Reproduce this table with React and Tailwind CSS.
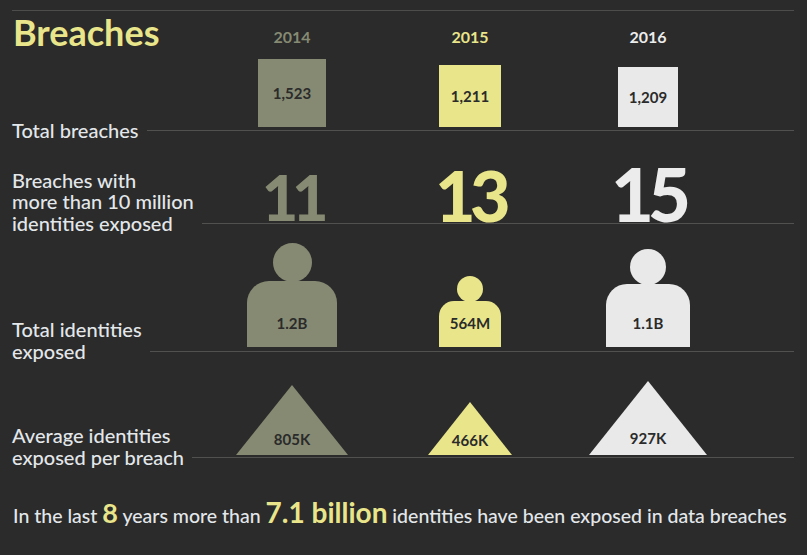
import React from "react";

function Label({ lines }) {
  return (
    <div className="flex items-end text-[20px] leading-[21.5px] font-medium text-[#e4e7ea]">
      <span className="whitespace-nowrap">
        {lines.map((l, i) => (
          <React.Fragment key={l}>
            {i > 0 && <br />}
            {l}
          </React.Fragment>
        ))}
      </span>
      <div className="mb-[10px] ml-[8px] h-px flex-1 bg-[#515250]" />
    </div>
  );
}

export default function App() {
  return (
    <div
      className="w-[807px] h-[555px] overflow-hidden bg-[#2a2b2a]"
      style={{ fontFamily: "Lato, 'Noto Sans', sans-serif" }}
    >
      <div className="ml-[12px] mr-[13px] mt-[10px] border-t border-[#4d4e4c]">
        {/* header */}
        <div className="grid h-[48px] grid-cols-[191px_178px_178px_178px_1fr]">
          <div className="pt-[3px] pl-[1px] text-[36px] font-bold leading-none text-[#e9e58a]">
            Breaches
          </div>
          <div className="pt-[18px] text-center text-[16px] font-bold leading-none text-[#868a73]">2014</div>
          <div className="pt-[18px] text-center text-[16px] font-bold leading-none text-[#e9e58a]">2015</div>
          <div className="pt-[18px] text-center text-[16px] font-bold leading-none text-[#ececec]">2016</div>
          <div />
        </div>

        {/* row 1: total breaches */}
        <div className="grid grid-cols-[191px_1fr] items-end">
          <Label lines={["Total breaches"]} />
          <div className="mb-[10px] grid h-[72px] grid-cols-[178px_178px_178px_1fr] items-end border-b border-[#515250]">
            <div className="mb-[3px] flex justify-center">
              <div className="flex h-[68px] w-[68px] items-center justify-center bg-[#868a73] text-[15px] font-bold text-[#2a2b2a]">1,523</div>
            </div>
            <div className="mb-[3px] flex justify-center">
              <div className="flex h-[62px] w-[62px] items-center justify-center bg-[#e9e58a] text-[15px] font-bold text-[#2a2b2a]">1,211</div>
            </div>
            <div className="mb-[3px] flex justify-center">
              <div className="flex h-[60px] w-[60px] items-center justify-center bg-[#e9e9e9] text-[15px] font-bold text-[#2a2b2a]">1,209</div>
            </div>
            <div />
          </div>
        </div>

        {/* row 2: big breaches */}
        <div className="grid grid-cols-[191px_1fr] items-end">
          <Label lines={["Breaches with", "more than 10 million", "identities exposed"]} />
          <div className="mb-[10px] grid h-[83px] grid-cols-[178px_178px_178px_1fr] items-end border-b border-[#515250]">
            <div className="mb-[1px] text-center text-[63px] font-black leading-[0.774] tracking-[-0.1em] text-[#868a73]">11</div>
            <div className="mb-[1px] text-center text-[70px] font-black leading-[0.774] tracking-[-0.08em] text-[#e9e58a]">13</div>
            <div className="mb-[1px] text-center text-[74px] font-black leading-[0.774] tracking-[-0.08em] text-[#ececec]">15</div>
            <div />
          </div>
        </div>

        {/* row 3: total identities */}
        <div className="grid grid-cols-[191px_1fr] items-end">
          <Label lines={["Total identities", "exposed"]} />
          <div className="mb-[10px] grid h-[118px] grid-cols-[178px_178px_178px_1fr] items-end border-b border-[#515250]">
            <div className="mb-[4px] flex flex-col items-center">
              <div className="h-[39px] w-[39px] rounded-full bg-[#868a73]" />
              <div className="-mt-px flex h-[66px] w-[90px] items-end justify-center rounded-t-[22px] bg-[#868a73] pb-[16px] text-[15px] font-bold leading-[15px] text-[#2a2b2a]">1.2B</div>
            </div>
            <div className="mb-[4px] flex flex-col items-center">
              <div className="h-[26px] w-[26px] rounded-full bg-[#e9e58a]" />
              <div className="-mt-px flex h-[46px] w-[62px] items-end justify-center rounded-t-[15px] bg-[#e9e58a] pb-[16px] text-[15px] font-bold leading-[15px] text-[#2a2b2a]">564M</div>
            </div>
            <div className="mb-[4px] flex flex-col items-center">
              <div className="h-[36px] w-[36px] rounded-full bg-[#e9e9e9]" />
              <div className="-mt-px flex h-[63px] w-[84px] items-end justify-center rounded-t-[21px] bg-[#e9e9e9] pb-[16px] text-[15px] font-bold leading-[15px] text-[#2a2b2a]">1.1B</div>
            </div>
            <div />
          </div>
        </div>

        {/* row 4: average */}
        <div className="grid grid-cols-[191px_1fr] items-end">
          <Label lines={["Average identities", "exposed per breach"]} />
          <div className="mb-[10px] grid h-[96px] grid-cols-[178px_178px_178px_1fr] items-end border-b border-[#515250]">
            <div className="mb-[2px] flex justify-center">
              <div className="flex h-[70px] w-[112px] items-end justify-center bg-[#868a73] pb-[8px] text-[15px] font-bold leading-[15px] text-[#2a2b2a] [clip-path:polygon(50%_0,100%_100%,0_100%)]">805K</div>
            </div>
            <div className="mb-[2px] flex justify-center">
              <div className="flex h-[53px] w-[84px] items-end justify-center bg-[#e9e58a] pb-[7px] text-[15px] font-bold leading-[15px] text-[#2a2b2a] [clip-path:polygon(50%_0,100%_100%,0_100%)]">466K</div>
            </div>
            <div className="mb-[2px] flex justify-center">
              <div className="flex h-[74px] w-[118px] items-end justify-center bg-[#e9e9e9] pb-[9px] text-[15px] font-bold leading-[15px] text-[#2a2b2a] [clip-path:polygon(50%_0,100%_100%,0_100%)]">927K</div>
            </div>
            <div />
          </div>
        </div>

        {/* footer */}
        <div className="mt-[29px] whitespace-nowrap pl-[1px] text-[19.5px] font-medium leading-[30px] text-[#e4e7ea]">
          In the last <span className="text-[27px] font-bold text-[#e9e58a]">8</span> years more than{" "}
          <span className="text-[28px] font-bold text-[#e9e58a]">7.1 billion</span> identities have been exposed in data breaches
        </div>
      </div>
    </div>
  );
}
